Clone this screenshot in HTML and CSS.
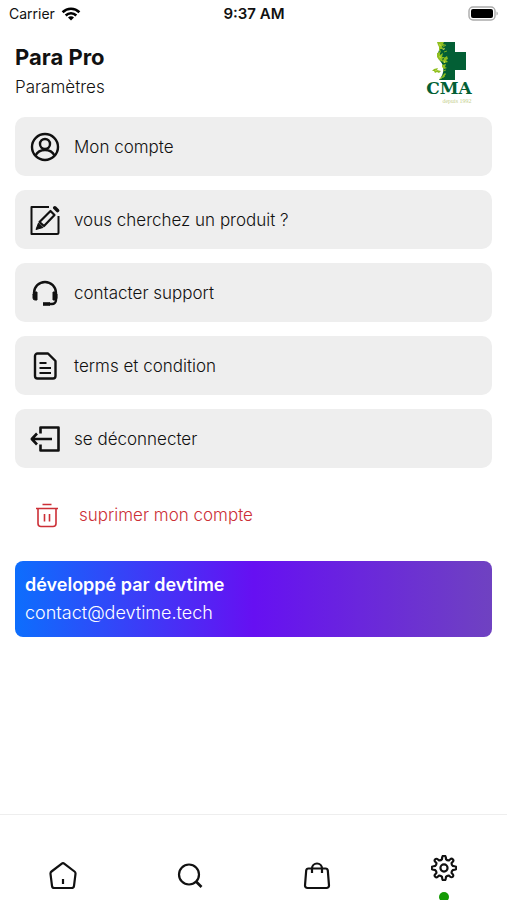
FILE: index.html
```html
<!DOCTYPE html>
<html lang="fr">
<head>
    <meta charset="UTF-8">
    <meta name="viewport" content="width=device-width, initial-scale=1.0">
    <title>Para Pro - Paramètres</title>
    <link rel="stylesheet" href="styles.css">
</head>
<body>
    <div class="status-bar">
        <div class="carrier">
            <span>Carrier</span>
            <svg width="20" height="14" viewBox="0 0 20 14" fill="none" stroke="#000" stroke-width="2.6">
                <path d="M1.6 5.2a12 12 0 0 1 16.8 0"/>
                <path d="M4.7 8.5a7.5 7.5 0 0 1 10.6 0"/>
                <path d="M10 13.6l-3-3a4.2 4.2 0 0 1 6 0z" fill="#000" stroke="none"/>
            </svg>
        </div>
        <strong class="time">9:37 AM</strong>
        <svg class="battery" width="31" height="15" viewBox="0 0 31 15">
            <rect x="1" y="1" width="26" height="13" rx="4" fill="#fff" stroke="#aaa" stroke-width="1.4"/>
            <rect x="3" y="3" width="22" height="9" rx="2" fill="#000"/>
            <path d="M28.5 5.5c1.8.6 1.8 3.4 0 4z" fill="#aaa"/>
        </svg>
    </div>

    <header class="header">
        <div>
            <h1>Para Pro</h1>
            <p>Paramètres</p>
        </div>
        <svg class="logo" width="60" height="64" viewBox="0 0 60 64" role="img" aria-label="CMA">
            <path d="M20 2h15v10h11v18H35v10H19c4-5 5-9 4-14-1-4-5-6-5-11 0-4 3-8 2-13z" fill="#035f35"/>
            <g fill="#8fbf20">
                <path d="M17 2l7 0-1 2 3 1-4 1 1 3-3 0 1 4-2-2 0-4-1-2z"/>
                <path d="M17 13l3-1 0 3 3-2-1 4 3 0-3 2 1 3-4-2-2-3z"/>
                <path d="M24 18l3-2 1 3-2 1 2 2-4 1-1-2zM22 25l4-1-1 3 2 1-3 1-2-2z"/>
                <path d="M14 29l4-1-1 2 4 1-2 2-2-1-2 1-1-2-2 0zM22 36l3-3 1 1-3 4z"/>
            </g>
            <g fill="#dbe85b">
                <path d="M19 4l2 1-1 1zM22 9l3-1-1 2zM19 16l2 1-1 1zM23 22l2-1v2zM15 30l2 0-1 1zM19 38l3-1-1 2z"/>
            </g>
            <path d="M23 7l3-2M24 12l3-1M22 20l3 1M23 31l3-1M20 39l5-3" fill="none" stroke="#8fbf20" stroke-width=".8"/>
            <text class="logo-name" x="29" y="54" text-anchor="middle">CMA</text>
            <text class="logo-since" x="37" y="63" text-anchor="middle">depuis 1992</text>
        </svg>
    </header>

    <main class="content">
        <div class="menu">
            <button class="menu-item" type="button">
                <svg width="30" height="30" viewBox="0 0 30 30" fill="none" stroke="#111" stroke-width="2.4">
                    <circle cx="15" cy="15" r="13"/>
                    <circle cx="15" cy="12" r="5"/>
                    <path d="M5.5 23.5c2-4 5.5-5.5 9.5-5.5s7.5 1.5 9.5 5.5"/>
                </svg>
                Mon compte
            </button>
            <button class="menu-item" type="button">
                <svg width="30" height="30" viewBox="0 0 30 30" fill="none" stroke="#111" stroke-width="2" stroke-linejoin="round">
                    <path d="M19 2H1.5v27H27a1.500 1.500 0 0 0 1.500-1.500V11"/>
                    <path d="M20.500 6l4 4L14 21l-4.500-4z" stroke-width="2.200"/>
                    <path d="M8.500 18l4.500 4.500L6 24.500z" fill="#111" stroke-width="1"/>
                    <path d="M24.800 2.800l2.700 2.700" stroke-width="3.600" stroke-linecap="round"/>
                </svg>
                vous cherchez un produit ?
            </button>
            <button class="menu-item" type="button">
                <svg width="30" height="30" viewBox="0 0 30 30" fill="none" stroke="#111" stroke-width="2.400">
                    <path d="M4 17v-2a11 11 0 0 1 22 0v7a4 4 0 0 1-4 4h-3"/>
                    <path d="M5 14h2v8H5a2 2 0 0 1-2-2v-4zM25 14h-2v8h2a2 2 0 0 0 2-2v-4z" fill="#111" stroke-width="1"/>
                    <path d="M13 26h7" stroke-width="3.600"/>
                </svg>
                contacter support
            </button>
            <button class="menu-item" type="button">
                <svg width="30" height="30" viewBox="0 0 30 30" fill="none" stroke="#111" stroke-width="2.400" stroke-linejoin="round">
                    <path d="M7.500 2.500H18L25.500 10v15a2.500 2.500 0 0 1-2.500 2.500H7.500A2.500 2.500 0 0 1 5 25V5a2.500 2.500 0 0 1 2.500-2.500z"/>
                    <path d="M9.500 12h7M9.500 17h11.500M9.500 22h11.500" stroke-width="2.200"/>
                </svg>
                terms et condition
            </button>
            <button class="menu-item" type="button">
                <svg width="30" height="30" viewBox="0 0 30 30" fill="none" stroke="#111" stroke-width="2.600" stroke-linejoin="round">
                    <path d="M10.500 9.500v-6h18v23h-18v-6"/>
                    <path d="M22 15H2M7 9.500L1.800 15 7 20.500"/>
                </svg>
                se déconnecter
            </button>
            <button class="menu-item delete" type="button">
                <svg width="24" height="26" viewBox="0 0 24 26" fill="none" stroke="#cc2f36" stroke-width="1.600">
                    <path d="M7.500 2.500h9M1 6.500h22M3 6.500v15a3 3 0 0 0 3 3h12a3 3 0 0 0 3-3v-15M9.500 12v7.500M14.500 12v7.500"/>
                </svg>
                suprimer mon compte
            </button>
        </div>

        <div class="credit">
            <strong>développé par devtime</strong>
            <a href="mailto:contact@devtime.tech">contact@devtime.tech</a>
        </div>
    </main>

    <nav class="tab-bar">
        <a href="#accueil" aria-label="Accueil">
            <svg width="28" height="28" viewBox="0 0 28 28" fill="none" stroke="#111" stroke-width="2.200" stroke-linejoin="round">
                <path d="M12.500 1.800a2.500 2.500 0 0 1 3 0L25.500 9.500a2.500 2.500 0 0 1 1 2.300l-1.500 12a2.500 2.500 0 0 1-2.500 2.200h-17A2.500 2.500 0 0 1 3 23.800l-1.500-12a2.500 2.500 0 0 1 1-2.300z"/>
                <path d="M14 17v5"/>
            </svg>
        </a>
        <a href="#recherche" aria-label="Recherche">
            <svg width="28" height="28" viewBox="0 0 28 28" fill="none" stroke="#111" stroke-width="2.200">
                <circle cx="13" cy="12.500" r="10"/>
                <path d="M20 19.500l5.500 5.500" stroke-width="2.600"/>
            </svg>
        </a>
        <a href="#panier" aria-label="Panier">
            <svg width="28" height="28" viewBox="0 0 28 28" fill="none" stroke="#111" stroke-width="2.200">
                <path d="M5.500 6.500h17a2.300 2.300 0 0 1 2.300 2l1.200 14.800a2.500 2.500 0 0 1-2.500 2.700h-19A2.500 2.500 0 0 1 2 23.300L3.200 8.500a2.300 2.300 0 0 1 2.300-2z"/>
                <path d="M9 11V6.500a5 5 0 0 1 10 0V11"/>
            </svg>
        </a>
        <a class="active" href="#parametres" aria-label="Paramètres">
            <svg width="26" height="26" viewBox="0 0 24 24" fill="none" stroke="#111" stroke-width="2" stroke-linejoin="round">
                <path d="M10.400 2.200A1.600 1.600 0 0 1 13.600 2.200L13.900 3.900Q14.900 5.200 16.600 5L17.800 3.900A1.600 1.600 0 0 1 20.100 6.200L19 7.400Q18.800 9.100 20.100 10.100L21.800 10.400A1.600 1.600 0 0 1 21.800 13.600L20.100 13.900Q18.800 14.900 19 16.600L20.100 17.800A1.600 1.600 0 0 1 17.800 20.100L16.600 19Q14.900 18.800 13.900 20.100L13.600 21.800A1.600 1.600 0 0 1 10.400 21.800L10.100 20.100Q9.100 18.800 7.400 19L6.200 20.100A1.600 1.600 0 0 1 3.900 17.800L5 16.600Q5.200 14.900 3.900 13.900L2.200 13.600A1.600 1.600 0 0 1 2.200 10.400L3.900 10.100Q5.200 9.100 5 7.400L3.900 6.200A1.600 1.600 0 0 1 6.200 3.900L7.400 5Q9.100 5.200 10.100 3.900z"/>
                <circle cx="12" cy="12" r="3.300"/>
            </svg>
            <span class="dot"></span>
        </a>
    </nav>
</body>
</html>
```

FILE: styles.css
```css
:root {
    --text: #111;
    --item: #eee;
    --danger: #cc2f36;
}

* {
    box-sizing: border-box;
}

body {
    display: flex;
    flex-direction: column;
    min-height: 100vh;
    margin: 0;
    background: #fff;
    color: var(--text);
    font-family: Inter, "Liberation Sans", sans-serif;
}

svg {
    flex: none;
    display: block;
}

.status-bar {
    display: grid;
    grid-template-columns: 1fr auto 1fr;
    align-items: center;
    height: 27px;
    padding: 0 8px 0 9px;
    font-size: 14px;
}

.carrier {
    display: flex;
    align-items: center;
    gap: 6px;
}

.time {
    font-size: 15px;
    font-weight: 600;
}

.battery {
    justify-self: end;
}

.header {
    display: flex;
    justify-content: space-between;
    padding: 13px 27px 0 15px;
}

h1 {
    margin: 3px 0 0;
    font-size: 22px;
    line-height: 28px;
    font-weight: 700;
}

.header p {
    margin: 2px 0 0;
    font-size: 17px;
    line-height: 28px;
    font-weight: 300;
}

.logo-name {
    font: bold 17px "DejaVu Serif", serif;
    fill: #035f35;
}

.logo-since {
    font: 6px "Liberation Serif", serif;
    fill: #c5d08f;
}

.content {
    padding: 13px 15px;
}

.menu {
    display: flex;
    flex-direction: column;
    gap: 14px;
}

.menu-item {
    display: flex;
    align-items: center;
    gap: 14px;
    width: 100%;
    height: 59px;
    padding: 0 15px;
    border: none;
    border-radius: 10px;
    background: var(--item);
    color: var(--text);
    font-family: inherit;
    font-size: 17px;
    font-weight: 300;
    text-align: left;
    cursor: pointer;
}

.delete {
    gap: 20px;
    height: 65px;
    padding: 0 20px;
    background: none;
    color: var(--danger);
}

.credit {
    display: flex;
    flex-direction: column;
    margin-top: 14px;
    padding: 10px;
    border-radius: 8px;
    background: linear-gradient(to right, #0d6efd, #6610f2, #6f42c1);
    color: #fff;
    font-size: 18px;
    line-height: 28px;
}

.credit strong {
    font-weight: 600;
}

.credit a {
    color: inherit;
    font-weight: 300;
    text-decoration: none;
}

.tab-bar {
    display: grid;
    grid-template-columns: repeat(4, 1fr);
    height: 86px;
    margin-top: auto;
    border-top: 1px solid #eee;
    overflow: hidden;
}

.tab-bar a {
    display: flex;
    flex-direction: column;
    align-items: center;
    padding-top: 47px;
}

.tab-bar .active {
    gap: 11px;
    padding-top: 40px;
}

.dot {
    flex: none;
    width: 10px;
    height: 10px;
    border-radius: 50%;
    background: #149a04;
}
```
